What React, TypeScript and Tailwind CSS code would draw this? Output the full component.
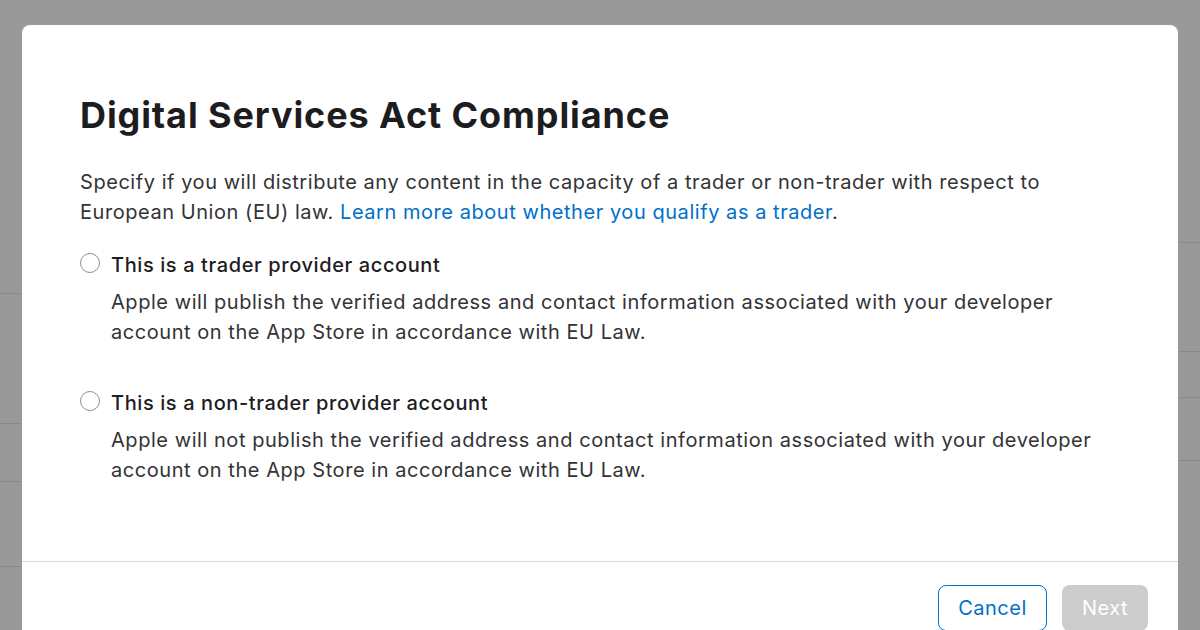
import React from "react";

function Radio() {
  return (
    <span className="mt-[3px] block h-[20px] w-[20px] shrink-0 rounded-full border border-[#8e8e8e] bg-white" />
  );
}

function Option({ label, desc }: { label: string; desc: string }) {
  return (
    <div className="flex items-start gap-[11px]">
      <Radio />
      <div>
        <div className="text-[20px] leading-[30px] font-medium tracking-[0.6px] text-[#1d1d1f]">{label}</div>
        <div className="mt-[7px] text-[20px] leading-[30px] tracking-[0.55px] text-[#333336]">{desc}</div>
      </div>
    </div>
  );
}

export default function App() {
  return (
    <div
      className="relative h-[630px] w-[1200px] overflow-hidden bg-[#999999]"
      style={{ fontFamily: "Inter, 'Noto Sans', sans-serif" }}
    >
      {/* background page (dimmed) */}
      <div className="flex h-full justify-between">
        <div className="flex w-[22px] flex-col">
          <div className="h-[294px] shrink-0 border-b border-[#8a8a8a]" />
          <div className="h-[130px] shrink-0 border-b border-[#8a8a8a]" />
          <div className="h-[58px] shrink-0 border-b border-[#8a8a8a]" />
          <div className="h-[85px] shrink-0 border-b border-[#8a8a8a]" />
        </div>
        <div className="flex w-[22px] flex-col">
          <div className="h-[243px] shrink-0 border-b border-[#8a8a8a]" />
          <div className="h-[109px] shrink-0 border-b border-[#8a8a8a]" />
          <div className="h-[46px] shrink-0 border-b border-[#8a8a8a]" />
          <div className="h-[63px] shrink-0 border-b border-[#8a8a8a]" />
        </div>
      </div>

      {/* modal */}
      <div className="absolute left-[22px] top-[25px] w-[1156px] h-[640px] rounded-t-[8px] bg-white">
        <div className="h-[536px] px-[58px] pt-[68px]">
          <h1 className="text-[36px] leading-[44px] font-bold tracking-[0.9px] text-[#1d1d1f]">
            Digital Services Act Compliance
          </h1>
          <p className="mt-[30px] text-[20px] leading-[30px] tracking-[0.55px] text-[#333336]">
            Specify if you will distribute any content in the capacity of a trader or non-trader with respect to
            European Union (EU) law.{" "}
            <a className="text-[#0070c9]">Learn more about whether you qualify as a trader</a>.
          </p>
          <div className="mt-[23px]">
            <Option
              label="This is a trader provider account"
              desc="Apple will publish the verified address and contact information associated with your developer account on the App Store in accordance with EU Law."
            />
          </div>
          <div className="mt-[41px]">
            <Option
              label="This is a non-trader provider account"
              desc="Apple will not publish the verified address and contact information associated with your developer account on the App Store in accordance with EU Law."
            />
          </div>
        </div>
        <div className="border-t border-[#d6d6d6] pt-[23px] pr-[30px] flex justify-end gap-[15px]">
          <button className="h-[46px] w-[109px] rounded-[8px] border border-[#0070c9] bg-white text-[20px] tracking-[0.5px] text-[#0070c9]">
            Cancel
          </button>
          <button className="h-[46px] w-[86px] rounded-[8px] bg-[#cccccc] text-[20px] tracking-[0.5px] text-white">
            Next
          </button>
        </div>
      </div>
    </div>
  );
}
